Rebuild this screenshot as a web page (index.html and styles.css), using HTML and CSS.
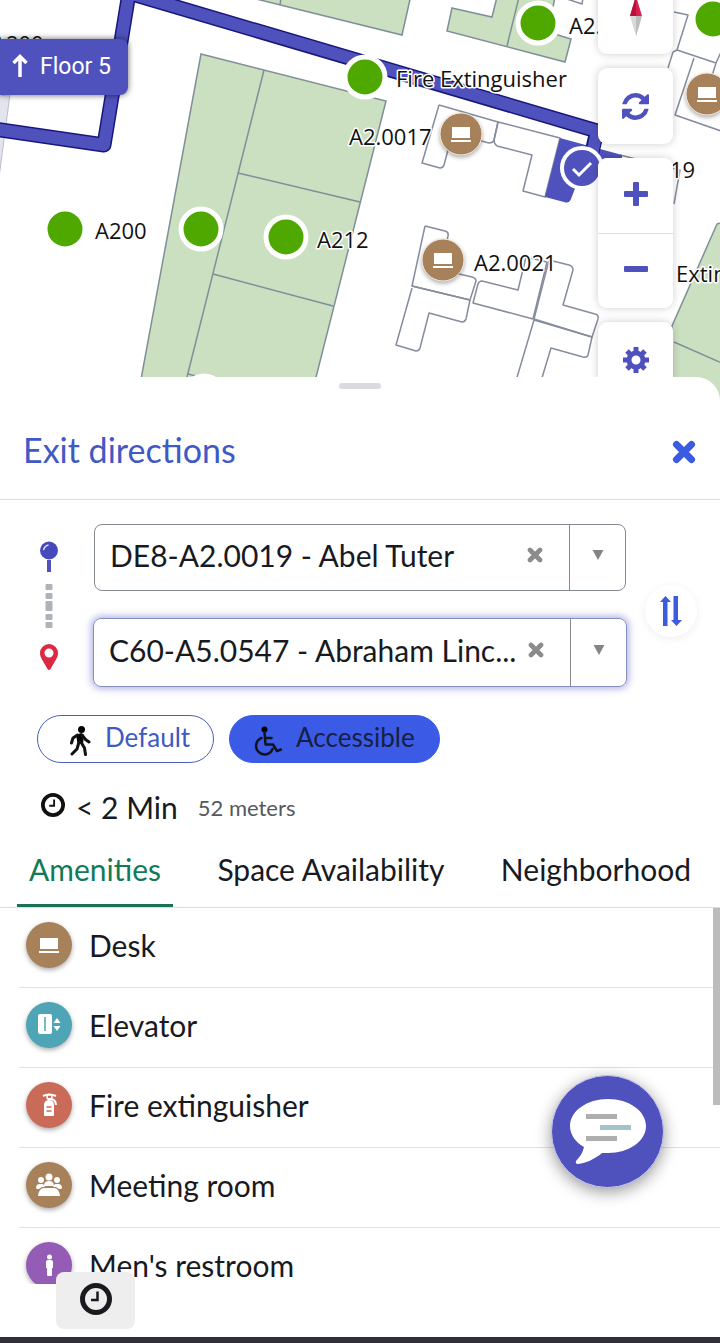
FILE: index.html
```html
<!DOCTYPE html>
<html lang="en">
<head>
<meta charset="utf-8">
<meta name="viewport" content="width=device-width, initial-scale=1">
<title>Exit directions</title>
<link rel="stylesheet" href="styles.css">
</head>
<body>
<svg class="sprite" aria-hidden="true">
  <symbol id="laptop" viewBox="0 0 46 46"><path fill="#fff" d="M14 16h18v11H14zM13 29h20v2H13z"/></symbol>
  <symbol id="clock" viewBox="0 0 32 32"><circle cx="16" cy="16" r="13.5" fill="none" stroke="currentColor" stroke-width="5"/><path d="M17.500 8.500v8.500h-6.500" fill="none" stroke="currentColor" stroke-width="2.500"/></symbol>
  <symbol id="cross" viewBox="0 0 24 24"><path d="M4.500 4.500l15 15M19.500 4.500l-15 15" stroke="currentColor" stroke-width="7" stroke-linecap="round"/></symbol>
  <symbol id="caret" viewBox="0 0 12 11"><path d="M0 0h12L6 11z" fill="currentColor"/></symbol>
</svg>
<main class="app">
  <section class="map" aria-label="Floor map">
    <svg class="plan" viewBox="0 0 720 401" preserveAspectRatio="xMaxYMin slice">
      <path class="void" d="M-4 97L10 94L-2 185z"/>
      <g class="room" stroke-width="1.5">
        <path d="M201 54L386 101L310 401H137z"/>
        <path d="M264 70L181 401M238 173L360 202M213 274L333 306M188 374L220 382"/>
        <path d="M240 -5L402 35L411 -5zM281 -2L280 5"/>
        <path d="M452 8L492 17L497 -3H555L548 32L571 39L565 62L447 31zM519 -3L507 46"/>
        <path d="M717 224L760 210V410H672V326zM674 342L724 364"/>
      </g>
      <g class="desk" stroke-width="1.5">
        <path d="M567 -1L582 4L583 -2"/>
        <path d="M439 105L498 122L494 140Q493 143 489 143L470 138M439 105L422 163L440 168Q443 168 444 165L448 150"/>
        <path d="M498 122L560 138L545 197L523 191L532 155L497 146Q494 144 494 140z"/>
        <path d="M425 226L445 231Q449 232 448 236L446 245M425 226L412 286L470 300L476 281Q476 278 472 277L455 273"/>
        <path d="M412 288L396 345L416 351Q419 351 420 348L429 313L462 322Q465 322 466 319L470 300L412 286"/>
        <path d="M473 303L478 284Q479 281 482 281L518 290L526 257L547 262L533 319z"/>
        <path d="M549 260L569 265Q573 266 573 270L563 305L595 314Q599 315 598 319L592 337L534 319z"/>
        <path d="M534 320L592 337L588 355Q587 358 583 357L551 348L535 401M534 320L510 401"/>
        <path d="M674 12L688 15L677 50L716 63L722 50M673 52L677 50M673 52L668 68M694 58L675 115L724 132M716 63L712 76M620 155L680 170L674 204"/>
      </g>
      <path class="picked" d="M560 138L622 155L622 162L584 165L571 199Q569 204 564 202L545 197z"/>
      <g class="route">
        <path class="route-edge" d="M-6 129L104 145L129 -7L597 131L592 152"/>
        <path class="route-fill" d="M-6 129L104 145L129 -7L597 131L592 155"/>
      </g>
      <g class="dot">
        <circle cx="365" cy="77" r="20"/><circle cx="65" cy="229" r="20"/><circle cx="201" cy="229" r="20"/>
        <circle cx="286" cy="237" r="20"/><circle cx="538" cy="23" r="20"/><circle cx="713" cy="19" r="20"/><circle cx="204" cy="396" r="20"/>
      </g>
      <g class="pin">
        <circle cx="461" cy="134" r="21"/><circle cx="443" cy="260" r="21"/><circle cx="707" cy="94" r="21"/>
      </g>
      <use href="#laptop" x="438" y="111" width="46" height="46"/>
      <use href="#laptop" x="420" y="237" width="46" height="46"/>
      <use href="#laptop" x="684" y="71" width="46" height="46"/>
      <circle class="here" cx="582" cy="168" r="20"/>
      <path class="here-check" d="M573 169l6 6l12-12"/>
      <g class="label">
        <text x="-8" y="52">A200</text>
        <text x="396" y="87">Fire Extinguisher</text>
        <text x="349" y="145">A2.0017</text>
        <text x="95" y="239">A200</text>
        <text x="317" y="248">A212</text>
        <text x="474" y="271">A2.0021</text>
        <text x="569" y="34">A2.</text>
        <text x="670" y="178">19</text>
        <text x="676" y="282">Extinguisher</text>
      </g>
    </svg>
    <div class="floor">
      <svg class="floor-arrow" viewBox="0 0 16 24"><path d="M8 23V3M1.500 9L8 2.500L14.500 9" fill="none" stroke="#fff" stroke-width="3.500"/></svg>
      <span>Floor 5</span>
    </div>
    <div class="controls">
      <button class="control" type="button" aria-label="Compass"><svg width="14" height="40" viewBox="0 0 14 40"><path d="M7 0l6 20H1z" fill="#d8214f"/><path d="M7 0v20H1z" fill="#b80f3c"/><path d="M1 20h12L7 40z" fill="#d9d9d9"/><path d="M7 20h6L7 40z" fill="#bdbdbd"/></svg></button>
      <button class="control" type="button" aria-label="Refresh"><svg width="27" height="27" viewBox="0 0 1536 1536"><path fill="currentColor" d="M1511 928q0 5-1 7-64 268-268 434.500t-478 166.500q-146 0-282.500-55t-243.500-157l-129 129q-19 19-45 19t-45-19-19-45v-448q0-26 19-45t45-19h448q26 0 45 19t19 45-19 45l-137 137q71 66 161 102t187 36q134 0 250-65t186-179q11-17 53-117 8-23 30-23h192q13 0 22.500 9.500t9.500 22.500zm25-800v448q0 26-19 45t-45 19h-448q-26 0-45-19t-19-45 19-45l138-138q-148-137-349-137-134 0-250 65t-186 179q-11 17-53 117-8 23-30 23h-199q-13 0-22.500-9.500t-9.500-22.500v-7q65-268 270-434.500t480-166.500q146 0 284 55.500t245 156.500l130-129q19-19 45-19t45 19 19 45z"/></svg></button>
      <div class="zoom">
        <button class="control" type="button" aria-label="Zoom in"><svg width="24" height="24" viewBox="0 0 24 24"><path d="M9 1q0-1 1-1h4q1 0 1 1v8h8q1 0 1 1v4q0 1-1 1h-8v8q0 1-1 1h-4q-1 0-1-1v-8H1q-1 0-1-1v-4q0-1 1-1h8z" fill="currentColor"/></svg></button>
        <button class="control" type="button" aria-label="Zoom out"><svg width="24" height="24" viewBox="0 0 24 24"><rect y="9" width="24" height="6" rx="1" fill="currentColor"/></svg></button>
      </div>
      <button class="control" type="button" aria-label="Settings"><svg width="26" height="26" viewBox="0 0 26 26"><g stroke="currentColor" stroke-width="5"><circle cx="13" cy="13" r="7" fill="none"/><path d="M13 0v5M13 21v5M0 13h5M21 13h5M4 4l3.500 3.500M18.500 18.500l3.500 3.500M4 22l3.500-3.500M18.500 7.500L22 4"/></g></svg></button>
    </div>
  </section>

  <section class="sheet">
    <div class="handle"></div>
    <header class="head">
      <h1 class="title">Exit directions</h1>
      <button class="close" type="button" aria-label="Close"><svg width="24" height="24"><use href="#cross"/></svg></button>
    </header>

    <form class="trip">
      <svg class="trail" viewBox="0 0 20 130" aria-hidden="true">
        <path d="M8 19h4v12H8z" fill="#4f52bd"/><circle cx="10" cy="9.500" r="9" fill="#4549bb"/><path d="M4.500 9q1-4 5-5" fill="none" stroke="#dfe0fa" stroke-width="1.500"/>
        <g fill="#adb3b9"><rect x="6.500" y="43" width="7" height="6" rx="1"/><rect x="6.500" y="52" width="7" height="6" rx="1"/><rect x="6.500" y="60" width="7" height="10" rx="1"/><rect x="6.500" y="73" width="7" height="6" rx="1"/><rect x="6.500" y="81" width="7" height="6" rx="1"/></g>
        <path fill="#dc2840" fill-rule="evenodd" d="M10 103a9 9 0 0 1 9 9c0 3-1 4.500-2 6.500L11.500 128q-1.500 2-3 0L3 118.500c-1-2-2-3.500-2-6.500a9 9 0 0 1 9-9zm0 4.500a4.500 4.500 0 1 0 0 9a4.500 4.500 0 1 0 0-9z"/>
      </svg>
      <div class="fields">
        <div class="field">
          <select class="value" aria-label="From"><option>DE8-A2.0019 - Abel Tuter</option></select>
          <button class="clear" type="button" aria-label="Clear start"><svg width="16" height="16"><use href="#cross"/></svg></button>
          <button class="open" type="button" aria-label="Show starting points"><svg width="12" height="10"><use href="#caret"/></svg></button>
        </div>
        <div class="field field-active">
          <select class="value" aria-label="To"><option>C60-A5.0547 - Abraham Linc...</option></select>
          <button class="clear" type="button" aria-label="Clear destination"><svg width="16" height="16"><use href="#cross"/></svg></button>
          <button class="open" type="button" aria-label="Show destinations"><svg width="12" height="10"><use href="#caret"/></svg></button>
        </div>
      </div>
      <button class="swap" type="button" aria-label="Swap"><svg width="24" height="30" viewBox="0 0 24 30"><path d="M4 30V6H1L6.500 0l5.500 6H8.500v24zM14.500 0H19v24h4l-5.500 6L12 24h2.500z" fill="currentColor"/></svg></button>
    </form>

    <div class="modes">
      <button class="mode" type="button">
        <svg width="24" height="30" viewBox="0 0 24 30"><circle cx="13.500" cy="3.500" r="3.500"/><path d="M8 9L13 7L16 9L15 18L9.500 17z"/><path d="M9.500 9L5 12L3.500 17M14 9L17.500 13.500L21 16M13.500 17L16.500 22L17.500 28.500M11 16L9 23L4 28" fill="none" stroke="#111" stroke-width="3" stroke-linecap="round" stroke-linejoin="round"/></svg>
        <span>Default</span>
      </button>
      <button class="mode mode-on" type="button">
        <svg width="28" height="30" viewBox="0 0 28 30"><circle cx="10.500" cy="3.500" r="3"/><path d="M10.500 6L11.500 18.500H19L23 25L27 23.500M11 12H17.500M7.500 12A8.500 8.500 0 1 0 18.500 23" fill="none" stroke="#10131c" stroke-width="2.500" stroke-linecap="round" stroke-linejoin="round"/></svg>
        <span>Accessible</span>
      </button>
    </div>

    <div class="summary">
      <svg class="summary-icon" width="24" height="24"><use href="#clock"/></svg>
      <span class="time">&lt; 2 Min</span>
      <span class="distance">52 meters</span>
    </div>

    <div class="tabs" role="tablist">
      <button class="tab tab-on" type="button" role="tab" aria-selected="true">Amenities</button>
      <button class="tab" type="button" role="tab" aria-selected="false">Space Availability</button>
      <button class="tab" type="button" role="tab" aria-selected="false">Neighborhood</button>
    </div>

    <div class="results">
      <ul class="list">
        <li class="row"><svg class="badge tan" viewBox="0 0 46 46"><use href="#laptop"/></svg>Desk</li>
        <li class="row"><svg class="badge teal" viewBox="0 0 46 46"><rect x="12" y="12" width="14" height="20" rx="2" fill="#fff"/><path d="M19 15v14" stroke="#4da5b6" stroke-width="1.500"/><path d="M31 16l3.500 5h-7zM31 29l3.500-5h-7z" fill="#fff"/></svg>Elevator</li>
        <li class="row"><svg class="badge red" viewBox="0 0 46 46"><path d="M18 23q0-4 4-5h2q4 1 4 5v10q0 1-1 1h-8q-1 0-1-1z" fill="#fff"/><circle cx="23.500" cy="15" r="2.500" fill="none" stroke="#fff" stroke-width="1.500"/><path d="M17 14q6-3 13 0M25 17q5 1 5 6M22 17h3" fill="none" stroke="#fff" stroke-width="2"/><path d="M20.500 25h5M20.500 29h5" stroke="#c96b58" stroke-width="1.500"/></svg>Fire extinguisher</li>
        <li class="row"><svg class="badge tan" viewBox="0 0 46 46"><g fill="#fff"><circle cx="15" cy="18" r="3"/><circle cx="31" cy="18" r="3"/><circle cx="23" cy="15" r="3.500"/><path d="M10 26q0-4 4-4h3l2 3h-3l-3 2h-2zM36 26q0-4-4-4h-3l-2 3h3l3 2h2zM18 24q0-5 5-5t5 5zM12 34q1-8 6-8h10q5 0 6 8z"/></g></svg>Meeting room</li>
        <li class="row"><svg class="badge purple" viewBox="0 0 46 46"><circle cx="23.500" cy="15" r="2.500" fill="#fff"/><path d="M20 20q0-2 2-2h3q2 0 2 2v6h-1v7q0 1-1 1h-3q-1 0-1-1v-7h-1z" fill="#fff"/></svg>Men's restroom</li>
      </ul>
      <div class="thumb"></div>
    </div>
  </section>

  <footer class="dock">
    <button class="recent" type="button" aria-label="Recent"><svg width="32" height="32"><use href="#clock"/></svg></button>
  </footer>

  <button class="chat" type="button" aria-label="Chat">
    <svg width="76" height="66" viewBox="0 0 76 66"><path fill="#fff" d="M38 0C59 0 76 12 76 27S59 54 38 54H32C25 60 16 64 8 65Q5 65 6 62C10 58 13 53 14 48C5 43 0 35 0 27C0 12 17 0 38 0z"/><path d="M16 15h31v5H16zM16 37h31v5H16z" fill="#aeaeae"/><path d="M30 26h31v5H30z" fill="#a3c3ca"/></svg>
  </button>
</main>
</body>
</html>
```

FILE: styles.css
```css
* { box-sizing: border-box; }
body {
  margin: 0;
  background: #fff;
  color: #181a1f;
  font-family: Lato, "Liberation Sans", sans-serif;
  font-size: 30px;
}
button, select { font: inherit; color: inherit; margin: 0; padding: 0; border: 0; background: none; }
button { display: flex; align-items: center; justify-content: center; cursor: pointer; }
svg { flex: none; }
.sprite { position: absolute; width: 0; height: 0; }
.app { position: relative; display: flex; flex-direction: column; height: 100vh; overflow: hidden; }

/* Map */
.map { position: relative; flex: none; height: 401px; overflow: hidden; }
.plan { display: block; width: 100%; height: 100%; }
.void { fill: #e3e4ed; stroke: #b9bdc9; }
.room path { fill: #cbdfc1; stroke: #7f8f98; }
.desk path { fill: none; stroke: #858c9e; stroke-linejoin: round; }
.picked { fill: #4f52bd; }
.route path { fill: none; stroke-linejoin: round; }
.route-edge { stroke: #17177d; stroke-width: 15px; }
.route-fill { stroke: #4f52bd; stroke-width: 12px; }
.dot circle { fill: #4fa800; stroke: #fff; stroke-width: 5px; }
.pin circle { fill: #a6815a; stroke: #f3ebe2; stroke-width: 1px; filter: drop-shadow(0 2px 2px #0005); }
.here { fill: #4f52bd; stroke: #fff; stroke-width: 4px; }
.here-check { fill: none; stroke: #fff; stroke-width: 3px; }
.label text {
  font-family: "Open Sans", "Noto Sans", sans-serif;
  font-size: 22px;
  fill: #111;
  stroke: #fff;
  stroke-width: 3px;
  stroke-linejoin: round;
  paint-order: stroke;
}
.floor {
  position: absolute;
  top: 39px;
  left: 0;
  display: flex;
  align-items: center;
  gap: 12px;
  height: 56px;
  padding: 0 17px 2px 12px;
  border-radius: 0 8px 8px 0;
  background: #4f52bd;
  box-shadow: 0 0 6px #0009;
  color: #fff;
  font: 23px Roboto, sans-serif;
}
.floor-arrow { width: 16px; height: 24px; }
.controls { position: absolute; top: -22px; right: 47px; display: flex; flex-direction: column; gap: 14px; color: #4f52bd; }
.control { width: 75px; height: 76px; border-radius: 9px; background: #fff; box-shadow: 0 0 8px #0003; }
.zoom { border-radius: 9px; background: #fff; box-shadow: 0 0 8px #0003; }
.zoom .control { height: 75px; padding-bottom: 4px; box-shadow: none; }
.zoom .control + .control { border-top: 1px solid #dedee0; border-radius: 0 0 9px 9px; }

/* Sheet */
.sheet {
  position: relative;
  display: flex;
  flex-direction: column;
  flex: 1;
  min-height: 0;
  margin-top: -24px;
  border-radius: 24px 24px 0 0;
  background: #fff;
}
.handle { align-self: center; flex: none; width: 42px; height: 6px; margin-top: 6px; border-radius: 3px; background: #dadbdf; }
.head {
  display: flex;
  align-items: center;
  justify-content: space-between;
  flex: none;
  height: 111px;
  padding: 16px 24px 0 23px;
  border-bottom: 1px solid #dcdcde;
}
.title { margin: 0; padding-bottom: 6px; color: #4059c4; font-size: 34px; font-weight: 400; }
.close { color: #3b5be0; }

.trip { display: flex; align-items: center; flex: none; padding: 24px 23px 0 39px; }
.trail { width: 20px; height: 130px; margin-right: 35px; }
.fields { display: flex; flex-direction: column; gap: 27px; flex: 1; min-width: 0; }
.field { display: flex; height: 67px; border: 1px solid #868b91; border-radius: 8px; }
.field-active { height: 69px; margin: 0 -1px; border-color: #868dc0; box-shadow: 0 0 7px 2px #6b74d088; }
.value { appearance: none; flex: 1; min-width: 0; padding: 0 0 6px 15px; outline: 0; white-space: nowrap; }
.clear { width: 36px; margin-right: 16px; padding-bottom: 6px; color: #8b8b8b; }
.open { width: 56px; padding-bottom: 6px; border-left: 1px solid #868b91; color: #858585; }
.swap { width: 52px; height: 52px; margin: 10px 0 0 19px; border-radius: 50%; background: #fff; box-shadow: 0 2px 10px #0001; color: #3b5be0; }

.modes { display: flex; flex: none; gap: 15px; padding: 28px 37px 0; }
.mode { height: 48px; gap: 13px; padding: 0 23px 0 30px; border: 1px solid #4a5fc0; border-radius: 24px; color: #4059c4; font-size: 26px; }
.mode span { padding-bottom: 4px; }
.mode svg { margin-top: 4px; }
.mode-on { padding: 0 24px; gap: 14px; border-color: #3b5be6; background: #3b5be6; color: #172044; }

.summary { display: flex; align-items: center; flex: none; height: 48px; margin-top: 20px; padding-left: 41px; }
.summary-icon { margin: 0 11px 4px 0; color: #111; }
.time { font-size: 30px; }
.distance { margin-left: 20px; color: #55585d; font-size: 22px; }

.tabs { display: flex; flex: none; justify-content: space-between; height: 77px; padding: 0 17px; border-bottom: 1px solid #dcdcde; }
.tab { padding: 2px 12px 0; border-bottom: 3px solid transparent; white-space: nowrap; }
.tab-on { border-color: #1c7354; color: #137a58; }

.results { position: relative; flex: 1; min-height: 0; }
.list { height: 100%; margin: 0; padding: 0 0 0 19px; overflow-y: auto; scrollbar-width: none; list-style: none; }
.row { display: flex; align-items: center; gap: 17px; height: 80px; padding: 0 0 6px 7px; border-bottom: 1px solid #dfe0e3; }
.badge { width: 46px; height: 46px; border-radius: 50%; box-shadow: 0 2px 5px #0005; }
.tan { background: #a6815a; }
.teal { background: #4da5b6; }
.red { background: #c96b58; }
.purple { background: #945cb5; }
.thumb { position: absolute; top: 0; right: 0; width: 7px; height: 197px; background: #bcbcbc; }

/* Floating and bottom items */
.dock { position: relative; flex: none; height: 59px; padding-left: 56px; border-bottom: 6px solid #303138; }
.recent { width: 79px; height: 57px; margin-top: -12px; padding-bottom: 4px; border-radius: 8px; background: #eee; color: #181a1f; }
.chat {
  position: absolute;
  right: 56px;
  bottom: 155px;
  width: 113px;
  height: 113px;
  border: 1px solid #c5c6f0;
  border-radius: 50%;
  background: #4f52bd;
  box-shadow: 0 4px 16px #0006;
}
```
